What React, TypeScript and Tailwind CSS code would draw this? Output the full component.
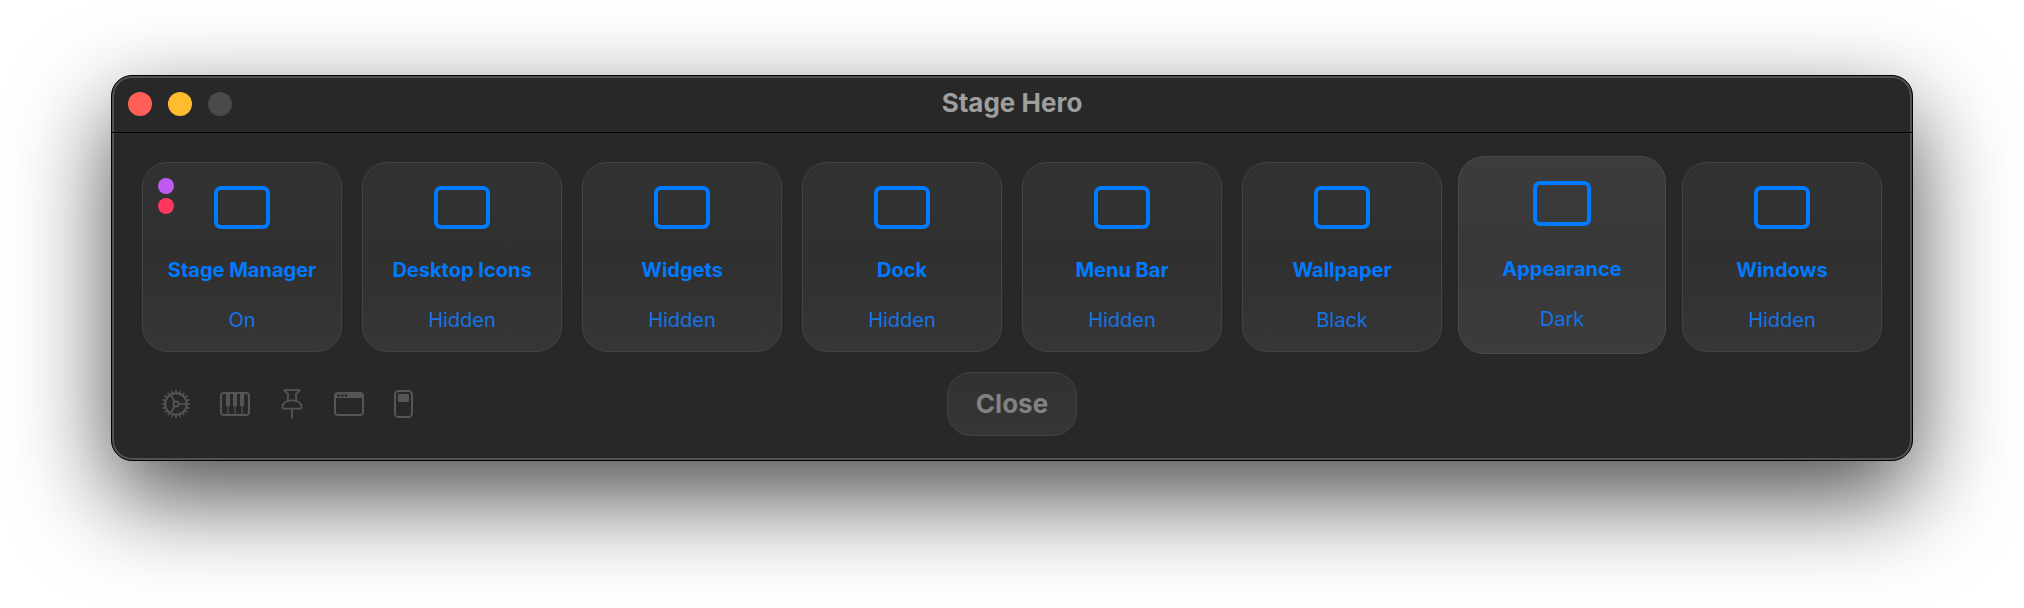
import React from "react";

type Tile = { title: string; status: string; marked?: boolean; raised?: boolean };

const tiles: Tile[] = [
  { title: "Stage Manager", status: "On", marked: true },
  { title: "Desktop Icons", status: "Hidden" },
  { title: "Widgets", status: "Hidden" },
  { title: "Dock", status: "Hidden" },
  { title: "Menu Bar", status: "Hidden" },
  { title: "Wallpaper", status: "Black" },
  { title: "Appearance", status: "Dark", raised: true },
  { title: "Windows", status: "Hidden" },
];

function TileButton({ title, status, marked, raised }: Tile) {
  return (
    <button
      type="button"
      className={
        raised
          ? "relative -mx-1 -mt-1.5 -mb-0.5 flex flex-col items-center rounded-[26px] border border-[#4a4a4a] bg-linear-to-b from-[#3c3c3c] via-[#383838] to-[#3c3c3c] pt-6"
          : "relative flex h-[190px] flex-col items-center rounded-[25px] border border-[#424242] bg-linear-to-b from-[#323232] via-[#303030] to-[#363636] pt-[23px]"
      }
    >
      {marked && (
        <span className="absolute top-[15px] left-[15px] flex flex-col gap-1">
          <span className="size-4 rounded-full bg-[#bf5af2]" />
          <span className="size-4 rounded-full bg-[#ff375f]" />
        </span>
      )}
      <span
        className={
          raised
            ? "mb-[29px] h-[45px] w-[58px] rounded-[7px] border-4 border-[#007aff]"
            : "mb-[27px] h-[43px] w-14 rounded-[7px] border-4 border-[#007aff]"
        }
      />
      <span className="mb-[22px] text-[20px] leading-[28px] font-bold whitespace-nowrap text-[#007aff]">{title}</span>
      <span className="text-[20px] leading-[28px] text-[#1673e6]">{status}</span>
    </button>
  );
}

function GearIcon() {
  return (
    <svg width="28" height="30" viewBox="0 0 28 30" fill="none" stroke="currentColor">
      <circle cx="14" cy="15" r="10.8" strokeWidth="2" />
      <circle cx="14" cy="15" r="12.8" strokeWidth="2.4" pathLength="200" strokeDasharray="4 6" strokeDashoffset="2" />
      <circle cx="14" cy="15" r="2.6" strokeWidth="1.7" />
      <path d="M16.6 15H25M12.7 12.8 8.5 5.5M12.7 17.2 8.5 24.5" strokeWidth="1.7" />
    </svg>
  );
}

function PianoIcon() {
  return (
    <svg width="30" height="30" viewBox="0 0 30 30" fill="none" stroke="currentColor">
      <rect x="1" y="4" width="28" height="22" rx="3" strokeWidth="2" />
      <path d="M8 16v10M15 16v10M22 16v10" strokeWidth="1.2" />
      <path d="M6 4h4v13H6zM13 4h4v13h-4zM20 4h4v13h-4z" fill="currentColor" stroke="none" />
    </svg>
  );
}

function PinIcon() {
  return (
    <svg width="24" height="30" viewBox="0 0 24 30" fill="none" stroke="currentColor" strokeWidth="1.8" strokeLinejoin="round" strokeLinecap="round">
      <path d="M4.4 1.1h15.200c0 1.600-1.900 2.800-3.700 4l.5 7c3.200 1 5.200 3.500 5.200 6.200 0 .9-.3 1.300-1.100 1.300H3.500c-.8 0-1.100-.4-1.100-1.300 0-2.700 2-5.200 5.200-6.200l.5-7c-1.800-1.200-3.700-2.400-3.700-4Z" />
      <path d="M7.600 12.100c2.800-.9 6-.9 8.800 0M12 19.600V29" />
    </svg>
  );
}

function WindowIcon() {
  return (
    <svg width="30" height="30" viewBox="0 0 30 30" fill="none" stroke="currentColor">
      <rect x="1" y="4" width="28" height="22" rx="3" strokeWidth="2" />
      <path d="M1 9V7a3 3 0 0 1 3-3h22a3 3 0 0 1 3 3v2Z" fill="currentColor" stroke="none" />
      <g fill="#242424" stroke="none">
        <circle cx="4.500" cy="6.500" r="1.200" />
        <circle cx="8.200" cy="6.500" r="1.200" />
        <circle cx="11.900" cy="6.500" r="1.200" />
      </g>
    </svg>
  );
}

function SwitchIcon() {
  return (
    <svg width="20" height="30" viewBox="0 0 20 30" fill="none" stroke="currentColor">
      <rect x="1" y="2" width="17" height="26" rx="3.500" strokeWidth="2" />
      <rect x="4" y="5" width="11" height="8" rx="1" fill="currentColor" stroke="none" />
    </svg>
  );
}

const tools = [
  { label: "Settings", Icon: GearIcon },
  { label: "Keyboard shortcuts", Icon: PianoIcon },
  { label: "Pin window", Icon: PinIcon },
  { label: "Window", Icon: WindowIcon },
  { label: "Switches", Icon: SwitchIcon },
];

export default function App() {
  return (
    <div className="min-h-screen bg-white px-[111px] pt-[75px] pb-[147px] font-['Inter',sans-serif]">
      <main className="rounded-[21px] border border-black bg-[#282828] shadow-[inset_0_0_0_2px_#525252,0_36px_96px_rgba(0,0,0,0.7)]">
        <header className="grid h-[57px] grid-cols-[1fr_auto_1fr] items-center border-b border-black px-4">
          <div className="flex gap-4">
            <button type="button" aria-label="Close window" className="size-6 rounded-full bg-[#ff5f57]" />
            <button type="button" aria-label="Minimize window" className="size-6 rounded-full bg-[#febc2e]" />
            <button type="button" aria-label="Zoom window" disabled className="size-6 rounded-full bg-[#4a4a4a]" />
          </div>
          <h1 className="pb-0.5 text-[26px] leading-8 font-bold text-[#9e9e9e]">Stage Hero</h1>
        </header>
        <div className="flex flex-col gap-5 px-[30px] pt-[29px] pb-6">
          <div className="grid grid-cols-8 gap-5">
            {tiles.map((t) => (
              <TileButton key={t.title} {...t} />
            ))}
          </div>
          <footer className="grid grid-cols-[1fr_auto_1fr] items-center px-5">
            <div className="flex gap-[30px] text-[#555555]">
              {tools.map(({ label, Icon }) => (
                <button key={label} type="button" aria-label={label}>
                  <Icon />
                </button>
              ))}
            </div>
            <button
              type="button"
              className="h-16 w-[130px] rounded-[24px] border border-[#424242] bg-linear-to-b from-[#313131] to-[#363636] text-[26px] leading-8 font-bold text-[#828284]"
            >
              Close
            </button>
          </footer>
        </div>
      </main>
    </div>
  );
}
